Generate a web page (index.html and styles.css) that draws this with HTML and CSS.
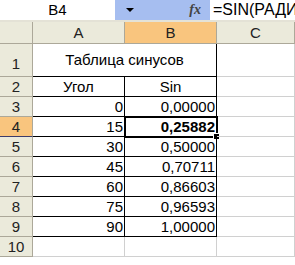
FILE: index.html
```html
<!DOCTYPE html>
<html lang="ru">
<head>
    <meta charset="UTF-8">
    <title>Таблица синусов</title>
    <link rel="stylesheet" href="styles.css">
</head>
<body>
    <div class="formula-bar">
        <div class="name-box">B4</div>
        <div class="bar-tools">
            <span class="drop-arrow"></span>
            <span class="fx">fx</span>
        </div>
        <div class="formula">=SIN(РАДИ</div>
    </div>

    <div class="sheet">
        <!-- header row -->
        <div class="hdr corner"></div>
        <div class="hdr">A</div>
        <div class="hdr sel-col">B</div>
        <div class="hdr">C</div>

        <div class="hdr rn tall">1</div>
        <div class="cell title t-bottom t-right">Таблица синусов</div>
        <div class="cell"></div>

        <div class="hdr rn">2</div>
        <div class="cell center t-bottom t-right">Угол</div>
        <div class="cell center t-bottom t-right">Sin</div>
        <div class="cell"></div>

        <div class="hdr rn">3</div>
        <div class="cell num t-bottom t-right">0</div>
        <div class="cell num t-bottom t-right">0,00000</div>
        <div class="cell"></div>

        <div class="hdr rn sel-row">4</div>
        <div class="cell num t-bottom t-right">15</div>
        <div class="cell num t-bottom t-right active">0,25882</div>
        <div class="cell"></div>

        <div class="hdr rn">5</div>
        <div class="cell num t-bottom t-right">30</div>
        <div class="cell num t-bottom t-right">0,50000</div>
        <div class="cell"></div>

        <div class="hdr rn">6</div>
        <div class="cell num t-bottom t-right">45</div>
        <div class="cell num t-bottom t-right">0,70711</div>
        <div class="cell"></div>

        <div class="hdr rn">7</div>
        <div class="cell num t-bottom t-right">60</div>
        <div class="cell num t-bottom t-right">0,86603</div>
        <div class="cell"></div>

        <div class="hdr rn">8</div>
        <div class="cell num t-bottom t-right">75</div>
        <div class="cell num t-bottom t-right">0,96593</div>
        <div class="cell"></div>

        <div class="hdr rn">9</div>
        <div class="cell num t-bottom t-right">90</div>
        <div class="cell num t-bottom t-right">1,00000</div>
        <div class="cell"></div>

        <div class="hdr rn">10</div>
        <div class="cell"></div>
        <div class="cell"></div>
        <div class="cell"></div>
    </div>
</body>
</html>
```

FILE: styles.css
```css
body {
    margin: 0;
    padding: 0;
    background-color: #fff;
    font-family: 'Liberation Sans', Arial, sans-serif;
    font-size: 15px;
    color: #000;
    overflow: hidden;
}

.formula-bar {
    display: flex;
    height: 20px;
    border-bottom: 2px solid #e4e2d6;
    white-space: nowrap;
    overflow: hidden;
}

.name-box {
    width: 115px;
    flex: none;
    text-align: center;
    line-height: 20px;
    background-color: #fff;
}

.bar-tools {
    width: 95px;
    flex: none;
    display: flex;
    align-items: center;
    justify-content: space-between;
    padding: 0 9px 0 11px;
    box-sizing: border-box;
    background-color: #a6bef0;
}

.drop-arrow {
    width: 0;
    height: 0;
    border-left: 4px solid transparent;
    border-right: 4px solid transparent;
    border-top: 4px solid #000;
}

.fx {
    font-family: 'Liberation Serif', serif;
    font-style: italic;
    font-weight: bold;
    font-size: 14px;
    color: #444;
}

.formula {
    flex: 1;
    padding-left: 3px;
    line-height: 20px;
    font-size: 16px;
    overflow: hidden;
}

.sheet {
    display: grid;
    grid-template-columns: 33px 92px 92px 78px;
    grid-template-rows: 22px 33px repeat(9, 20px);
}

.hdr {
    background-color: #ebeadb;
    border-right: 1px solid #aca899;
    border-bottom: 1px solid #aca899;
    box-sizing: border-box;
    text-align: center;
    line-height: 21px;
    color: #222;
}

.corner {
    background-color: #ebeadb;
}

.rn {
    line-height: 19px;
}

.rn.tall {
    display: flex;
    align-items: flex-end;
    justify-content: center;
    padding-bottom: 3px;
}

.sel-col,
.sel-row {
    background-color: #f9c57e;
}

.sel-row {
    border-bottom-color: #3b3b6b;
}

.cell {
    position: relative;
    border-right: 1px solid #d0d0d0;
    border-bottom: 1px solid #d0d0d0;
    box-sizing: border-box;
    line-height: 19px;
    padding: 0 1px;
    white-space: nowrap;
}

.title {
    grid-column: span 2;
    display: flex;
    align-items: center;
    justify-content: center;
    padding-bottom: 2px;
}

.center {
    text-align: center;
}

.num {
    text-align: right;
}

.t-bottom {
    border-bottom-color: #000;
}

.t-right {
    border-right-color: #000;
}

.active {
    font-weight: bold;
    outline: 2px solid #000;
    outline-offset: -1px;
}

.active::after {
    content: '';
    position: absolute;
    right: -4px;
    bottom: -4px;
    width: 5px;
    height: 5px;
    background-color: #000;
    border: 1px solid #fff;
}
```
